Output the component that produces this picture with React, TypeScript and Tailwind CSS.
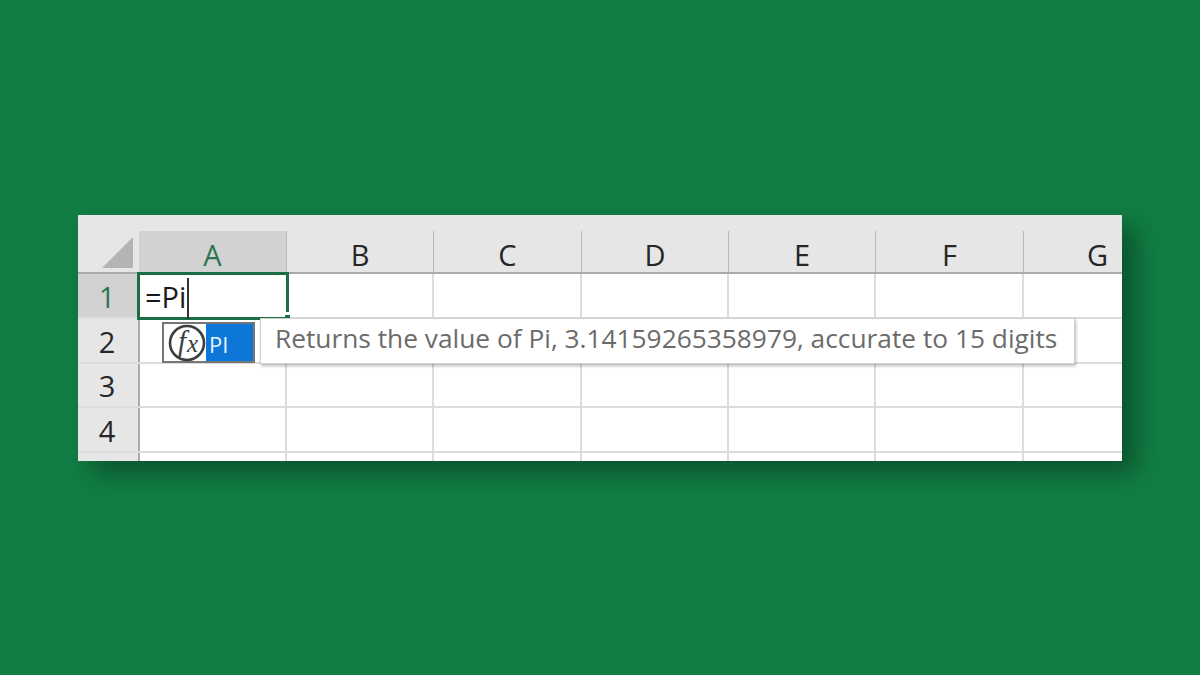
const columns = ["A", "B", "C", "D", "E", "F", "G"];
const rows = ["1", "2", "3", "4"];

function FxIcon() {
  return (
    <svg width="40" height="38" viewBox="0 0 40 38" fill="none" aria-hidden="true">
      <circle cx="21" cy="19" r="17" stroke="#3d3d3d" strokeWidth="2.6" />
      <text x="12" y="27" fontFamily="'Liberation Serif', serif" fontStyle="italic" fontSize="29" fill="#3d3d3d">
        f
      </text>
      <text x="21" y="28" fontFamily="'Liberation Serif', serif" fontStyle="italic" fontSize="25" fill="#3d3d3d">
        x
      </text>
    </svg>
  );
}

export default function App() {
  return (
    <div className="flex h-[675px] w-[1200px] items-start bg-[#117c43] pl-[78px] pt-[215px] font-['Open_Sans',sans-serif]">
      <div className="relative w-[1044px] overflow-hidden bg-white shadow-[14px_12px_22px_rgba(0,0,0,0.32)]">
        <div className="h-[16px] bg-[#e6e6e6]" />

        <div className="grid h-[43px] grid-cols-[61px_147px_147px_148px_147px_147px_148px_148px] border-b-2 border-[#ababab] bg-[#e6e6e6]">
          <div className="flex items-end justify-end pb-[4px] pr-[6px]">
            <div className="h-[31px] w-[31px] bg-[#b4b4b4] [clip-path:polygon(100%_0,100%_100%,0_100%)]" />
          </div>
          {columns.map((col, index) => (
            <div
              key={col}
              className={`flex items-center justify-center pt-[5px] text-[29px] leading-none ${
                index === 0 ? "bg-[#d2d2d2] text-[#2f7551]" : "border-l border-[#b9b9b9] text-[#262626]"
              }`}
            >
              {col}
            </div>
          ))}
        </div>

        {rows.map((row, rowIndex) => (
          <div
            key={row}
            className="grid h-[44.75px] grid-cols-[62px_147px_147px_148px_147px_147px_148px_148px] border-b-2 border-[#dcdcdc]"
          >
            <div
              className={`flex items-center justify-center border-r-2 border-[#ababab] pr-[2px] pt-[2px] text-[29px] leading-none ${
                rowIndex === 0 ? "bg-[#d2d2d2] text-[#2f7551]" : "bg-[#e6e6e6] text-[#262626]"
              }`}
            >
              {row}
            </div>
            {columns.map((col) => (
              <div key={col} className="border-r-2 border-[#dcdcdc]" />
            ))}
          </div>
        ))}
        <div className="grid h-[8px] grid-cols-[62px_147px_147px_148px_147px_147px_148px_148px]">
          <div className="border-r-2 border-[#ababab] bg-[#e6e6e6]" />
          {columns.map((col) => (
            <div key={col} className="border-r-2 border-[#dcdcdc]" />
          ))}
        </div>

        {/* active cell */}
        <div className="absolute left-[59px] top-[57px] h-[48px] w-[152px] border-[3px] border-[#1a6e41] bg-white">
          <div className="flex h-full items-center pl-[5px] text-[29px] leading-none text-[#1a1a1a]">
            =Pi
            <span className="ml-[1px] mt-[4px] h-[41px] w-[2px] shrink-0 bg-[#333333]" />
          </div>
        </div>
        <div className="absolute left-[207px] top-[97px] h-[3px] w-[5px] bg-white" />
        <div className="absolute left-[207px] top-[100px] h-[5px] w-[5px] bg-[#1a6e41]" />

        {/* autocomplete */}
        <div className="absolute left-[84px] top-[107px] flex h-[41px] w-[93px] items-stretch border-2 border-[#767676] bg-white">
          <div className="flex w-[42px] items-center justify-end">
            <FxIcon />
          </div>
          <div className="flex flex-1 items-center bg-[#0d77d8] pl-[3px] pt-[2px] text-[22px] leading-none text-[#e6f2fc]">PI</div>
        </div>

        {/* tooltip */}
        <div className="absolute left-[182px] top-[103px] flex h-[46px] w-[815px] items-center whitespace-nowrap border border-[#d0d0d0] bg-white pb-[6px] pl-[14px] text-[26.3px] leading-none text-[#6b6b6b] shadow-[1px_2px_3px_rgba(0,0,0,0.28)]">
          Returns the value of Pi, 3.14159265358979, accurate to 15 digits
        </div>
      </div>
    </div>
  );
}
